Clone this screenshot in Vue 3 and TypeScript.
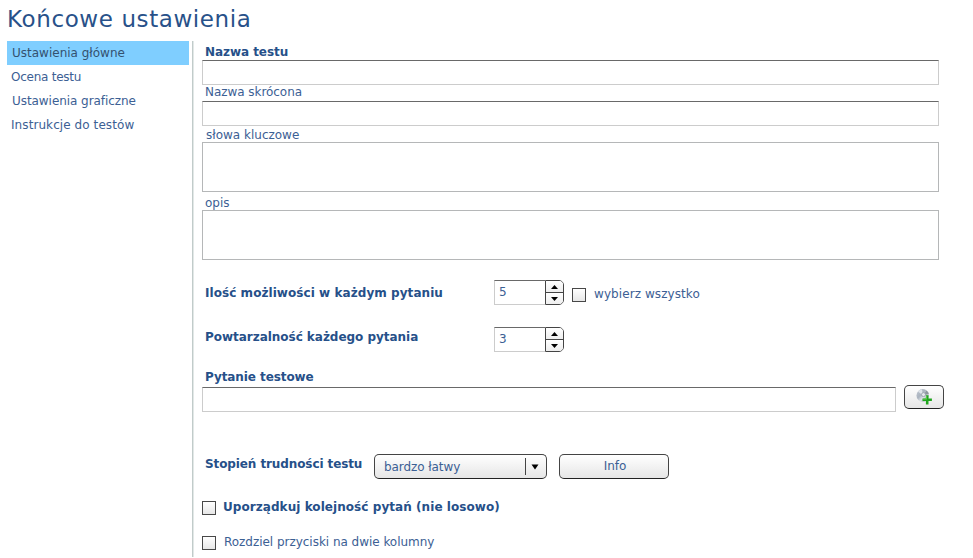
<script setup lang="ts">
import { ref } from 'vue'

const sections = ['Ustawienia główne', 'Ocena testu', 'Ustawienia graficzne', 'Instrukcje do testów']
const active = ref(0)
const options = ref(5)
const repeats = ref(3)
const selectAll = ref(false)
const ordered = ref(false)
const twoColumns = ref(false)
</script>

<template>
  <div class="page">
    <h1><span>Końcowe ustawienia</span></h1>
    <div class="body">
      <nav>
        <a v-for="(s, i) in sections" :key="s" :class="['item', 'item-' + i, { active: i === active }]" @click="active = i"><span>{{ s }}</span></a>
      </nav>
      <main>
        <label class="lab bold l-name">Nazwa testu</label>
        <input class="field" type="text" />
        <label class="lab l-short">Nazwa skrócona</label>
        <input class="field" type="text" />
        <label class="lab l-keys">słowa kluczowe</label>
        <textarea class="area"></textarea>
        <label class="lab l-desc">opis</label>
        <textarea class="area"></textarea>

        <div class="row r-options">
          <label class="bold w-options">Ilość możliwości w każdym pytaniu</label>
          <div class="stepper">
            <span class="value">{{ options }}</span>
            <div class="arrows">
              <button class="up" @click="options++"><svg width="7" height="4" viewBox="0 0 7 4"><path d="M3.5 0 7 4H0z" /></svg></button>
              <button class="down" @click="options--"><svg width="7" height="4" viewBox="0 0 7 4"><path d="M0 0H7L3.5 4z" /></svg></button>
            </div>
          </div>
          <input v-model="selectAll" class="check" type="checkbox" />
          <span class="all">wybierz wszystko</span>
        </div>

        <div class="row r-repeats">
          <label class="bold w-repeats">Powtarzalność każdego pytania</label>
          <div class="stepper">
            <span class="value">{{ repeats }}</span>
            <div class="arrows">
              <button class="up" @click="repeats++"><svg width="7" height="4" viewBox="0 0 7 4"><path d="M3.5 0 7 4H0z" /></svg></button>
              <button class="down" @click="repeats--"><svg width="7" height="4" viewBox="0 0 7 4"><path d="M0 0H7L3.5 4z" /></svg></button>
            </div>
          </div>
        </div>

        <label class="lab bold l-question">Pytanie testowe</label>
        <div class="question">
          <input class="field" type="text" />
          <button class="btn add">
            <svg width="18" height="18" viewBox="0 0 18 18">
              <defs>
                <linearGradient id="disc" x1="0" y1="0" x2="1" y2="1">
                  <stop offset="0" stop-color="#c3c9d2" />
                  <stop offset=".4" stop-color="#aab3bf" />
                  <stop offset=".6" stop-color="#dde2e7" />
                  <stop offset="1" stop-color="#929ca8" />
                </linearGradient>
              </defs>
              <ellipse cx="7.7" cy="7.5" rx="6.2" ry="6.5" fill="url(#disc)" />
              <path d="M8 7.5 3 3.6Q5 1.4 7 1.5z" fill="#dfe4ea" />
              <path d="M8 7.5 11.5 2.6Q13.5 4 13.9 6z" fill="#8e979f" />
              <circle cx="8.5" cy="6.6" r="2" fill="#e6e9ed" stroke="#929ba6" stroke-width=".8" />
              <path d="M10.9 7.3h2.6v3.3h3.4v2.5h-3.4v3.4h-2.6v-3.4H7.5v-2.5h3.4z" fill="#20a51e" />
              <path d="M11.5 8v3.2H8" fill="none" stroke="#63d052" stroke-width=".8" />
            </svg>
          </button>
        </div>

        <div class="row r-level">
          <label class="bold w-level">Stopień trudności testu</label>
          <button class="btn select">
            <span class="choice">bardzo łatwy</span>
            <span class="sep"></span>
            <svg width="8" height="6" viewBox="0 0 8 6"><path d="M.5 .5H7.5L4 5.5z" /></svg>
          </button>
          <button class="btn info"><span>Info</span></button>
        </div>

        <div class="row r-ordered">
          <input v-model="ordered" class="check" type="checkbox" />
          <label class="bold t-ordered">Uporządkuj kolejność pytań (nie losowo)</label>
        </div>
        <div class="row r-columns">
          <input v-model="twoColumns" class="check" type="checkbox" />
          <label class="t-columns">Rozdziel przyciski na dwie kolumny</label>
        </div>
      </main>
    </div>
  </div>
</template>

<style>
body { margin: 0; background: #fff; overflow: hidden; }
</style>

<style scoped>
* { box-sizing: border-box; }
.page { width: 973px; height: 558px; padding-left: 7px; font: 12px/16px Verdana, "DejaVu Sans", sans-serif; color: #3c6094; white-space: nowrap; }
h1 { margin: 0; height: 41px; padding-top: 4px; font-size: 23px; line-height: 30px; font-weight: 400; color: #285189; letter-spacing: .6px; }
.body { display: flex; height: 516px; }
nav { width: 182px; }
.item { display: block; height: 24px; padding-left: 5px; line-height: 24px; cursor: pointer; }
.item-1, .item-3 { padding-left: 4px; }
.item-1 { letter-spacing: -.25px; }
.item-2 { letter-spacing: -.06px; }
.item-3 { letter-spacing: .08px; }
.active { background: #7fceff; color: #34516f; }
main { display: flex; flex-direction: column; align-items: flex-start; margin-left: 3px; padding-left: 8px; border-left: 1px solid #c1cbca; box-shadow: inset 1px 0 #e2e8e7; padding-left: 9px; width: 781px; }
.bold { font-weight: 700; color: #265089; }
.lab { display: block; padding-left: 3px; flex: none; }
.l-name { height: 19px; padding-top: 3px; letter-spacing: -.06px; }
.l-short { height: 16px; line-height: 14px; letter-spacing: -.05px; }
.l-keys { height: 16px; padding: 1px 0 0 4px; }
.l-desc { height: 18px; padding-top: 3px; }
.field { display: block; flex: none; width: 737px; height: 25px; margin: 0; padding: 0 4px; border: 1px solid #ccc; border-top-color: #696969; border-radius: 0; background: #fff; outline: none; font: inherit; color: inherit; }
.area { display: block; flex: none; width: 737px; height: 50px; margin: 0; padding: 4px; border: 1px solid #b5b7b8; border-radius: 0; background: #fff; resize: none; outline: none; font: inherit; color: inherit; }
.row { display: flex; align-items: flex-start; flex: none; }
.r-options { margin-top: 20px; height: 25px; }
.w-options, .w-repeats { width: 292px; padding-left: 3px; }
.w-options { padding-top: 5px; letter-spacing: .06px; }
.r-repeats { margin-top: 22px; height: 25px; }
.w-repeats { padding-top: 2px; letter-spacing: -.03px; }
.stepper { display: flex; width: 70px; height: 25px; }
.value { width: 51px; padding: 3px 0 0 4px; border: 1px solid #ccc; border-top-color: #696969; border-right: 0; }
.arrows { display: flex; flex-direction: column; width: 19px; border: 1px solid #444; border-radius: 0 5px 5px 0; overflow: hidden; }
.arrows button { display: flex; align-items: center; justify-content: center; padding: 0; border: 0; background: linear-gradient(#fff, #eee); }
.arrows .up { height: 12px; border-bottom: 1px solid #444; }
.arrows .down { height: 11px; }
.check { appearance: none; flex: none; width: 14px; height: 14px; margin: 0; border: 1px solid #484848; border-radius: 0; background: linear-gradient(#fff, #e7e7e7); }
.check:checked { background: #214d86; }
.r-options .check { margin: 8px 8px 0; }
.all { padding-top: 6px; letter-spacing: .08px; }
.l-question { height: 35px; padding-top: 17px; letter-spacing: -.08px; }
.question { display: flex; height: 27px; }
.question .field { width: 694px; }
.btn { display: flex; align-items: center; margin: 0; padding: 0; border: 1px solid #444; border-bottom-color: #222; border-radius: 5px; background: linear-gradient(#fff, #e6e6e6); font: inherit; color: inherit; }
.add { width: 40px; height: 24px; margin: -2px 0 0 8px; justify-content: center; }
.r-level { margin-top: 40px; height: 25px; }
.w-level { width: 172px; padding: 2px 0 0 3px; letter-spacing: -.1px; }
.select { width: 173px; height: 25px; padding-left: 9px; }
.choice { width: 141px; text-align: left; letter-spacing: -.08px; }
.sep { width: 1px; height: 17px; margin-right: 5px; background: #444; }
.info { width: 110px; height: 25px; margin-left: 12px; justify-content: center; }
.info span { padding: 0 0 2px 2px; }
.r-ordered { margin-top: 22px; height: 14px; }
.r-columns { margin-top: 21px; height: 14px; }
.t-ordered { margin: -2px 0 0 7px; letter-spacing: .06px; }
.t-columns { margin: -2px 0 0 8px; letter-spacing: -.03px; }
</style>
